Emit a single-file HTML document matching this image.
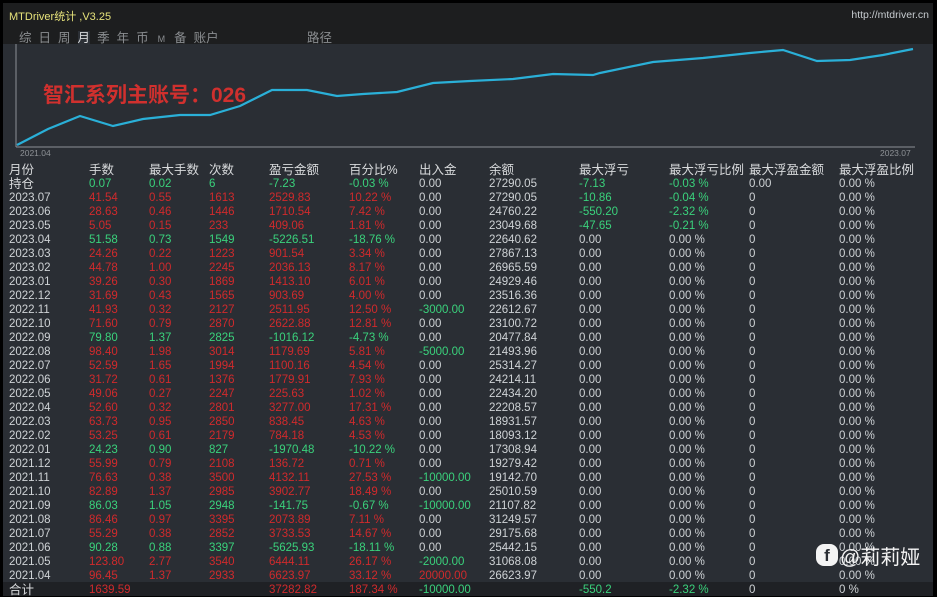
<!DOCTYPE html>
<html><head><meta charset="utf-8"><style>
*{margin:0;padding:0}
body{width:937px;height:595px;background:#000;position:relative;overflow:hidden;font-family:"Liberation Sans","Noto Sans CJK SC",sans-serif;font-size:11.5px;color:#cfd3d6}
#win{position:absolute;left:3px;top:3px;width:930px;height:592px;background:#2a2e34}
#title{position:absolute;left:0;top:0;width:930px;height:41px;background:#1d1e1f}
.r{position:absolute;left:0;width:930px;height:14px;line-height:14px;white-space:nowrap}
.r span{position:absolute;top:0}
.a{left:6px}.b{left:86px}.c{left:146px}.d{left:206px}.e{left:266px}.f{left:346px}.g{left:416px}.h{left:486px}.i{left:576px}.j{left:666px}.k{left:746px}.l{left:836px}
.R{color:#d02a2c}.G{color:#3ad27c}
.hd{font-size:12.5px;color:#d8dadc}
#t{position:absolute;left:0;top:2px;width:930px;height:590px}
</style></head><body>
<div id="win">
<div id="title">
<div style="position:absolute;left:6px;top:5px;color:#e6e27a;font-size:11px">MTDriver统计 ,V3.25</div>
<div style="position:absolute;right:4px;top:6px;color:#c7ccd0;font-size:10.5px">http://mtdriver.cn</div>
<div style="position:absolute;left:16px;top:24px;color:#8a8d90;font-size:12.5px;letter-spacing:0">
<span style="margin-right:7px">综</span><span style="margin-right:7px">日</span><span style="margin-right:7px">周</span><span style="margin-right:7px;color:#d8dadc;background:#2c3036">月</span><span style="margin-right:7px">季</span><span style="margin-right:7px">年</span><span style="margin-right:9px">币</span><span style="margin-right:9px;font-size:9px">M</span><span style="margin-right:7px">备</span><span>账户</span><span style="position:absolute;left:288px;width:40px">路径</span></div>
</div>
<svg style="position:absolute;left:0;top:41px" width="930" height="115">
<line x1="13" y1="0" x2="13" y2="103" stroke="#8c9096" stroke-width="1"/>
<line x1="13" y1="103" x2="912" y2="103" stroke="#8c9096" stroke-width="1"/>
<polyline fill="none" stroke="#2ab0d8" stroke-width="2.2" points="14,101 45,85 77,72 110,82 140,75 177,71 207,71 237,62 269,46 304,46 334,52 360,50 394,48 430,39 467,37 510,35 550,30 590,31 597,29 650,18 700,14 747,9 780,6 814,17 847,16 880,11 910,5"/>
</svg>
<div style="position:absolute;left:17px;top:145px;font-size:8.5px;color:#8e9296">2021.04</div>
<div style="position:absolute;left:877px;top:145px;font-size:8.5px;color:#8e9296">2023.07</div>
<div style="position:absolute;left:40px;top:76px;font-size:21px;color:#d0302e;font-weight:bold">智汇系列主账号：026</div>
<div id="t">
<div class="r hd" style="top:158px"><span class="a">月份</span><span class="b">手数</span><span class="c">最大手数</span><span class="d">次数</span><span class="e">盈亏金额</span><span class="f">百分比%</span><span class="g">出入金</span><span class="h">余额</span><span class="i">最大浮亏</span><span class="j">最大浮亏比例</span><span class="k">最大浮盈金额</span><span class="l">最大浮盈比例</span></div>
<div class="r" style="top:172px"><span class="a hd">持仓</span><span class="b G">0.07</span><span class="c G">0.02</span><span class="d G">6</span><span class="e G">-7.23</span><span class="f G">-0.03 %</span><span class="g">0.00</span><span class="h">27290.05</span><span class="i G">-7.13</span><span class="j G">-0.03 %</span><span class="k">0.00</span><span class="l">0.00 %</span></div>

<div class="r" style="top:186px"><span class="a">2023.07</span><span class="b R">41.54</span><span class="c R">0.55</span><span class="d R">1613</span><span class="e R">2529.83</span><span class="f R">10.22 %</span><span class="g">0.00</span><span class="h">27290.05</span><span class="i G">-10.86</span><span class="j G">-0.04 %</span><span class="k">0</span><span class="l">0.00 %</span></div>
<div class="r" style="top:200px"><span class="a">2023.06</span><span class="b R">28.63</span><span class="c R">0.46</span><span class="d R">1446</span><span class="e R">1710.54</span><span class="f R">7.42 %</span><span class="g">0.00</span><span class="h">24760.22</span><span class="i G">-550.20</span><span class="j G">-2.32 %</span><span class="k">0</span><span class="l">0.00 %</span></div>
<div class="r" style="top:214px"><span class="a">2023.05</span><span class="b R">5.05</span><span class="c R">0.15</span><span class="d R">233</span><span class="e R">409.06</span><span class="f R">1.81 %</span><span class="g">0.00</span><span class="h">23049.68</span><span class="i G">-47.65</span><span class="j G">-0.21 %</span><span class="k">0</span><span class="l">0.00 %</span></div>
<div class="r" style="top:228px"><span class="a">2023.04</span><span class="b G">51.58</span><span class="c G">0.73</span><span class="d G">1549</span><span class="e G">-5226.51</span><span class="f G">-18.76 %</span><span class="g">0.00</span><span class="h">22640.62</span><span class="i">0.00</span><span class="j">0.00 %</span><span class="k">0</span><span class="l">0.00 %</span></div>
<div class="r" style="top:242px"><span class="a">2023.03</span><span class="b R">24.26</span><span class="c R">0.22</span><span class="d R">1223</span><span class="e R">901.54</span><span class="f R">3.34 %</span><span class="g">0.00</span><span class="h">27867.13</span><span class="i">0.00</span><span class="j">0.00 %</span><span class="k">0</span><span class="l">0.00 %</span></div>
<div class="r" style="top:256px"><span class="a">2023.02</span><span class="b R">44.78</span><span class="c R">1.00</span><span class="d R">2245</span><span class="e R">2036.13</span><span class="f R">8.17 %</span><span class="g">0.00</span><span class="h">26965.59</span><span class="i">0.00</span><span class="j">0.00 %</span><span class="k">0</span><span class="l">0.00 %</span></div>
<div class="r" style="top:270px"><span class="a">2023.01</span><span class="b R">39.26</span><span class="c R">0.30</span><span class="d R">1869</span><span class="e R">1413.10</span><span class="f R">6.01 %</span><span class="g">0.00</span><span class="h">24929.46</span><span class="i">0.00</span><span class="j">0.00 %</span><span class="k">0</span><span class="l">0.00 %</span></div>
<div class="r" style="top:284px"><span class="a">2022.12</span><span class="b R">31.69</span><span class="c R">0.43</span><span class="d R">1565</span><span class="e R">903.69</span><span class="f R">4.00 %</span><span class="g">0.00</span><span class="h">23516.36</span><span class="i">0.00</span><span class="j">0.00 %</span><span class="k">0</span><span class="l">0.00 %</span></div>
<div class="r" style="top:298px"><span class="a">2022.11</span><span class="b R">41.93</span><span class="c R">0.32</span><span class="d R">2127</span><span class="e R">2511.95</span><span class="f R">12.50 %</span><span class="g G">-3000.00</span><span class="h">22612.67</span><span class="i">0.00</span><span class="j">0.00 %</span><span class="k">0</span><span class="l">0.00 %</span></div>
<div class="r" style="top:312px"><span class="a">2022.10</span><span class="b R">71.60</span><span class="c R">0.79</span><span class="d R">2870</span><span class="e R">2622.88</span><span class="f R">12.81 %</span><span class="g">0.00</span><span class="h">23100.72</span><span class="i">0.00</span><span class="j">0.00 %</span><span class="k">0</span><span class="l">0.00 %</span></div>
<div class="r" style="top:326px"><span class="a">2022.09</span><span class="b G">79.80</span><span class="c G">1.37</span><span class="d G">2825</span><span class="e G">-1016.12</span><span class="f G">-4.73 %</span><span class="g">0.00</span><span class="h">20477.84</span><span class="i">0.00</span><span class="j">0.00 %</span><span class="k">0</span><span class="l">0.00 %</span></div>
<div class="r" style="top:340px"><span class="a">2022.08</span><span class="b R">98.40</span><span class="c R">1.98</span><span class="d R">3014</span><span class="e R">1179.69</span><span class="f R">5.81 %</span><span class="g G">-5000.00</span><span class="h">21493.96</span><span class="i">0.00</span><span class="j">0.00 %</span><span class="k">0</span><span class="l">0.00 %</span></div>
<div class="r" style="top:354px"><span class="a">2022.07</span><span class="b R">52.59</span><span class="c R">1.65</span><span class="d R">1994</span><span class="e R">1100.16</span><span class="f R">4.54 %</span><span class="g">0.00</span><span class="h">25314.27</span><span class="i">0.00</span><span class="j">0.00 %</span><span class="k">0</span><span class="l">0.00 %</span></div>
<div class="r" style="top:368px"><span class="a">2022.06</span><span class="b R">31.72</span><span class="c R">0.61</span><span class="d R">1376</span><span class="e R">1779.91</span><span class="f R">7.93 %</span><span class="g">0.00</span><span class="h">24214.11</span><span class="i">0.00</span><span class="j">0.00 %</span><span class="k">0</span><span class="l">0.00 %</span></div>
<div class="r" style="top:382px"><span class="a">2022.05</span><span class="b R">49.06</span><span class="c R">0.27</span><span class="d R">2247</span><span class="e R">225.63</span><span class="f R">1.02 %</span><span class="g">0.00</span><span class="h">22434.20</span><span class="i">0.00</span><span class="j">0.00 %</span><span class="k">0</span><span class="l">0.00 %</span></div>
<div class="r" style="top:396px"><span class="a">2022.04</span><span class="b R">52.60</span><span class="c R">0.32</span><span class="d R">2801</span><span class="e R">3277.00</span><span class="f R">17.31 %</span><span class="g">0.00</span><span class="h">22208.57</span><span class="i">0.00</span><span class="j">0.00 %</span><span class="k">0</span><span class="l">0.00 %</span></div>
<div class="r" style="top:410px"><span class="a">2022.03</span><span class="b R">63.73</span><span class="c R">0.95</span><span class="d R">2850</span><span class="e R">838.45</span><span class="f R">4.63 %</span><span class="g">0.00</span><span class="h">18931.57</span><span class="i">0.00</span><span class="j">0.00 %</span><span class="k">0</span><span class="l">0.00 %</span></div>
<div class="r" style="top:424px"><span class="a">2022.02</span><span class="b R">53.25</span><span class="c R">0.61</span><span class="d R">2179</span><span class="e R">784.18</span><span class="f R">4.53 %</span><span class="g">0.00</span><span class="h">18093.12</span><span class="i">0.00</span><span class="j">0.00 %</span><span class="k">0</span><span class="l">0.00 %</span></div>
<div class="r" style="top:438px"><span class="a">2022.01</span><span class="b G">24.23</span><span class="c G">0.90</span><span class="d G">827</span><span class="e G">-1970.48</span><span class="f G">-10.22 %</span><span class="g">0.00</span><span class="h">17308.94</span><span class="i">0.00</span><span class="j">0.00 %</span><span class="k">0</span><span class="l">0.00 %</span></div>
<div class="r" style="top:452px"><span class="a">2021.12</span><span class="b R">55.99</span><span class="c R">0.79</span><span class="d R">2108</span><span class="e R">136.72</span><span class="f R">0.71 %</span><span class="g">0.00</span><span class="h">19279.42</span><span class="i">0.00</span><span class="j">0.00 %</span><span class="k">0</span><span class="l">0.00 %</span></div>
<div class="r" style="top:466px"><span class="a">2021.11</span><span class="b R">76.63</span><span class="c R">0.38</span><span class="d R">3500</span><span class="e R">4132.11</span><span class="f R">27.53 %</span><span class="g G">-10000.00</span><span class="h">19142.70</span><span class="i">0.00</span><span class="j">0.00 %</span><span class="k">0</span><span class="l">0.00 %</span></div>
<div class="r" style="top:480px"><span class="a">2021.10</span><span class="b R">82.89</span><span class="c R">1.37</span><span class="d R">2985</span><span class="e R">3902.77</span><span class="f R">18.49 %</span><span class="g">0.00</span><span class="h">25010.59</span><span class="i">0.00</span><span class="j">0.00 %</span><span class="k">0</span><span class="l">0.00 %</span></div>
<div class="r" style="top:494px"><span class="a">2021.09</span><span class="b G">86.03</span><span class="c G">1.05</span><span class="d G">2948</span><span class="e G">-141.75</span><span class="f G">-0.67 %</span><span class="g G">-10000.00</span><span class="h">21107.82</span><span class="i">0.00</span><span class="j">0.00 %</span><span class="k">0</span><span class="l">0.00 %</span></div>
<div class="r" style="top:508px"><span class="a">2021.08</span><span class="b R">86.46</span><span class="c R">0.97</span><span class="d R">3395</span><span class="e R">2073.89</span><span class="f R">7.11 %</span><span class="g">0.00</span><span class="h">31249.57</span><span class="i">0.00</span><span class="j">0.00 %</span><span class="k">0</span><span class="l">0.00 %</span></div>
<div class="r" style="top:522px"><span class="a">2021.07</span><span class="b R">55.29</span><span class="c R">0.38</span><span class="d R">2852</span><span class="e R">3733.53</span><span class="f R">14.67 %</span><span class="g">0.00</span><span class="h">29175.68</span><span class="i">0.00</span><span class="j">0.00 %</span><span class="k">0</span><span class="l">0.00 %</span></div>
<div class="r" style="top:536px"><span class="a">2021.06</span><span class="b G">90.28</span><span class="c G">0.88</span><span class="d G">3397</span><span class="e G">-5625.93</span><span class="f G">-18.11 %</span><span class="g">0.00</span><span class="h">25442.15</span><span class="i">0.00</span><span class="j">0.00 %</span><span class="k">0</span><span class="l">0.00 %</span></div>
<div class="r" style="top:550px"><span class="a">2021.05</span><span class="b R">123.80</span><span class="c R">2.77</span><span class="d R">3540</span><span class="e R">6444.11</span><span class="f R">26.17 %</span><span class="g G">-2000.00</span><span class="h">31068.08</span><span class="i">0.00</span><span class="j">0.00 %</span><span class="k">0</span><span class="l">0.00 %</span></div>
<div class="r" style="top:564px"><span class="a">2021.04</span><span class="b R">96.45</span><span class="c R">1.37</span><span class="d R">2933</span><span class="e R">6623.97</span><span class="f R">33.12 %</span><span class="g R">20000.00</span><span class="h">26623.97</span><span class="i">0.00</span><span class="j">0.00 %</span><span class="k">0</span><span class="l">0.00 %</span></div>
<div style="position:absolute;left:0;top:577px;width:930px;height:14px;background:#1f2125"></div>
<div class="r" style="top:578px"><span class="a hd">合计</span><span class="b R">1639.59</span><span class="e R">37282.82</span><span class="f R">187.34 %</span><span class="g G">-10000.00</span><span class="i G">-550.2</span><span class="j G">-2.32 %</span><span class="k">0</span><span class="l">0 %</span></div>
</div>
</div>
<div style="position:absolute;left:816px;top:544px;width:22px;height:22px;border-radius:8px;background:#f4f4f4;color:#2a2e34;font-weight:bold;font-size:17px;line-height:23px;text-align:center">f</div>
<div style="position:absolute;left:840px;top:541px;font-size:20px;color:#f4f4f4">@莉莉娅</div>
</body></html>
